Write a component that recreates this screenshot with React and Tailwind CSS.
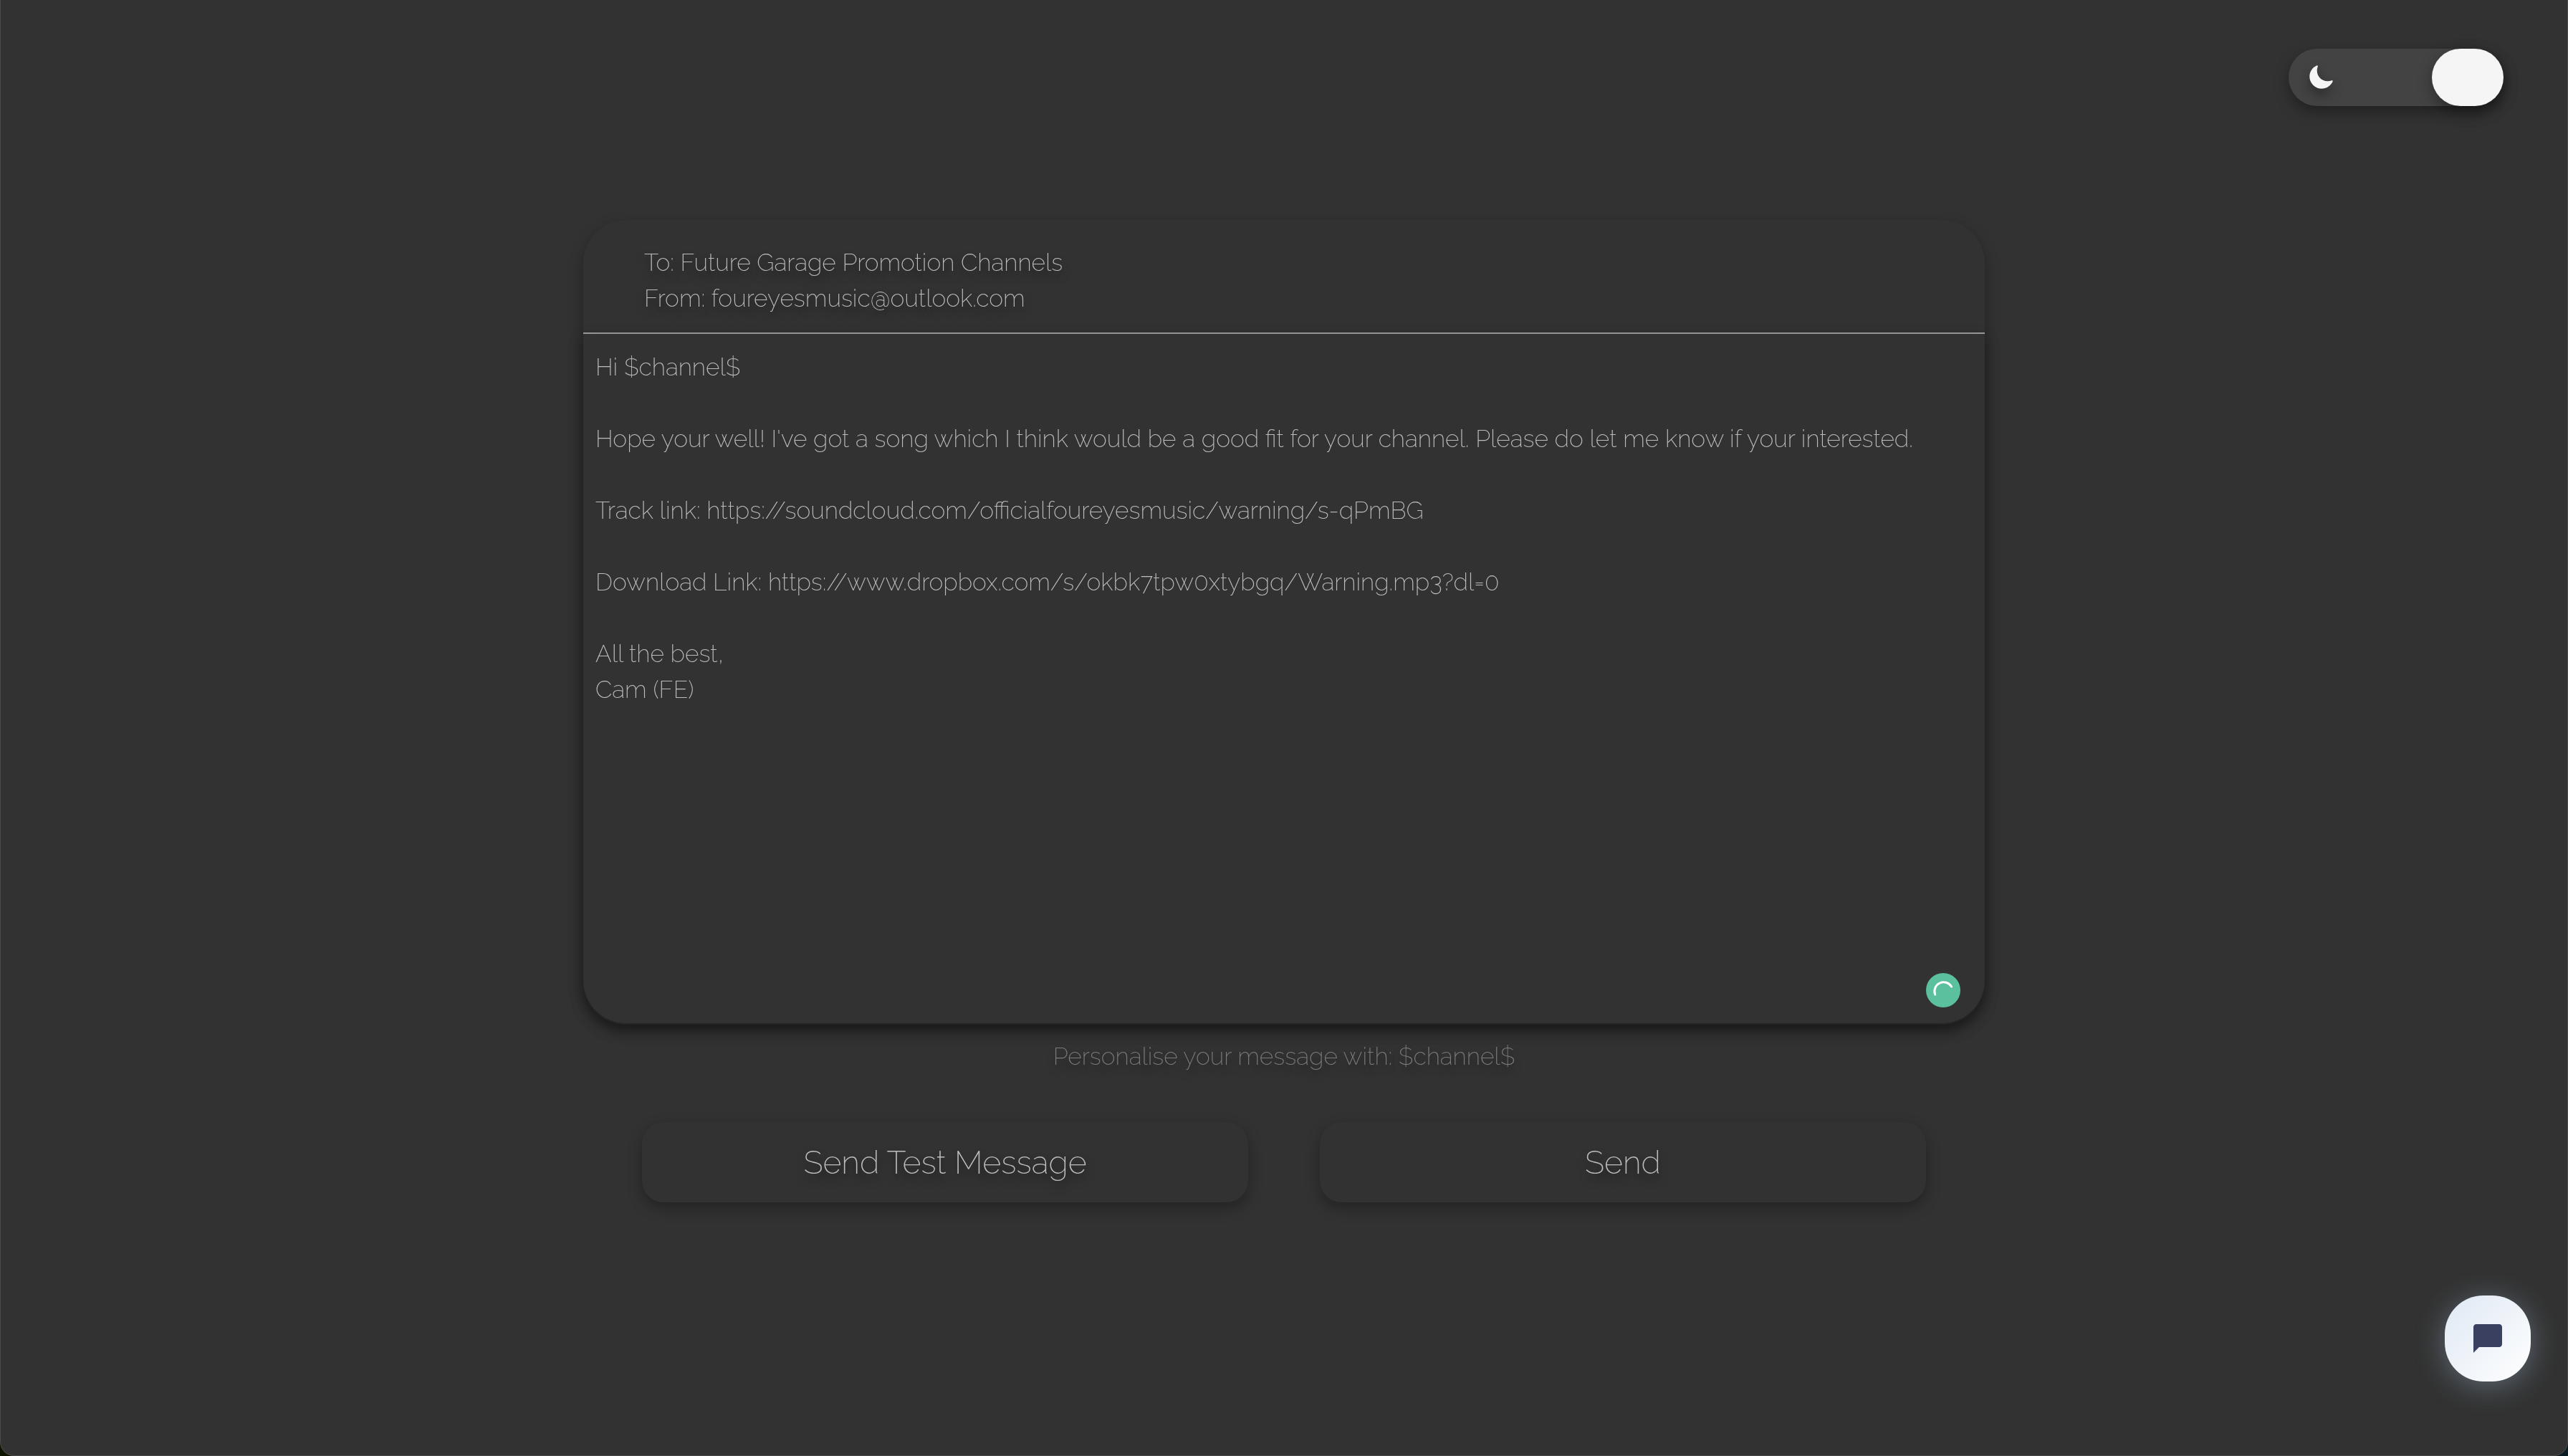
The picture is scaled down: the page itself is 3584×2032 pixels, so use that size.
import { useState } from 'react'
import { IoMoon } from 'react-icons/io5'

const DEFAULT_MESSAGE = `Hi $channel$

Hope your well! I've got a song which I think would be a good fit for your channel. Please do let me know if your interested.

Track link: https://soundcloud.com/officialfoureyesmusic/warning/s-qPmBG

Download Link: https://www.dropbox.com/s/okbk7tpw0xtybgq/Warning.mp3?dl=0

All the best,
Cam (FE)`

function ThemeToggle({ dark, onToggle }) {
  return (
    <button
      onClick={onToggle}
      className="flex items-center justify-between w-[300px] h-20 pl-[27px] rounded-full bg-[#434343] shadow-[0_8px_20px_rgba(0,0,0,0.35)]"
    >
      <IoMoon className="w-[37px] h-[37px] mb-0.5 text-[#f5f5f5] drop-shadow-[0_8px_8px_rgba(0,0,0,0.4)]" />
      {dark && (
        <div className="w-[100px] h-20 rounded-full bg-[#f5f5f5] shadow-[0_8px_20px_rgba(0,0,0,0.35)]" />
      )}
    </button>
  )
}

function GrammarBadge() {
  return (
    <svg viewBox="0 0 48 48" className="absolute right-[34px] bottom-[22px] w-12 h-12">
      <circle cx="24" cy="24" r="24" fill="#5bc09d" />
      <path
        d="M12.7 30 A12.75 12.75 0 0 1 35.6 19"
        fill="none"
        stroke="#fff"
        strokeWidth="3"
        strokeLinecap="round"
      />
    </svg>
  )
}

function MessageCard({ to, from, message, onChange }) {
  return (
    <section className="w-[1956px] h-[1123px] pb-0.5 flex flex-col rounded-[60px] bg-[#323232] shadow-[0_8px_20px_rgba(0,0,0,0.3)]">
      <header className="h-[159px] pt-[34px] pl-[85px] border-b-2 border-[#9e9e9e] text-shadow-[0_8px_12px_rgba(0,0,0,0.5)]">
        <p>To: {to}</p>
        <p>From: {from}</p>
      </header>
      <div className="relative flex-1 flex">
        <textarea
          value={message}
          onChange={onChange}
          spellCheck={false}
          className="flex-1 pt-[21px] pl-[17px] pr-4 resize-none outline-none rounded-b-[60px] bg-[#323232] shadow-[0_8px_20px_rgba(0,0,0,0.35)]"
        />
        <GrammarBadge />
      </div>
    </section>
  )
}

function ActionButton({ children }) {
  return (
    <button className="w-[846px] h-28 rounded-[30px] bg-[#323232] text-[44.8px] font-extralight text-shadow-[0_8px_12px_rgba(0,0,0,0.5)] shadow-[0_8px_20px_rgba(0,0,0,0.3)]">
      {children}
    </button>
  )
}

function ChatButton() {
  return (
    <button className="absolute right-[51px] bottom-[103px] w-[120px] h-[120px] flex items-center justify-center rounded-[54px] bg-linear-135 from-[#dfe8f3] to-white shadow-[0_6px_40px_rgba(150,175,200,0.45)]">
      <svg viewBox="0 0 20 20" className="w-10 h-10" fill="#394060">
        <path d="M18 0H2C.9 0 0 .9 0 2v18l4-4h14c1.1 0 2-.9 2-2V2c0-1.1-.9-2-2-2z" />
      </svg>
    </button>
  )
}

function App() {
  const [dark, setDark] = useState(true)
  const [message, setMessage] = useState(DEFAULT_MESSAGE)

  return (
    <div className="w-[3584px] h-[2032px] bg-linear-to-r from-[#0d1400] to-[#0b1c22]">
      <div className="relative w-full h-full flex flex-col overflow-hidden will-change-transform rounded-b-[20px] border-x border-b border-[#4a4a4a] bg-[#323232] text-[#bdbdbd] font-['Raleway','Lato',sans-serif] font-extralight text-[33.6px] leading-[50px]">
        <nav className="flex justify-end pt-[68px] pr-[89px]">
          <ThemeToggle dark={dark} onToggle={() => setDark(!dark)} />
        </nav>

        <main className="flex flex-col items-center pt-[159px]">
          <MessageCard
            to="Future Garage Promotion Channels"
            from="foureyesmusic@outlook.com"
            message={message}
            onChange={(e) => setMessage(e.target.value)}
          />
          <p className="mt-[19px] text-[#7c7c7c] text-shadow-[0_8px_12px_rgba(0,0,0,0.4)]">
            Personalise your message with: $channel$
          </p>
          <div className="flex gap-[100px] mt-[67px]">
            <ActionButton>Send Test Message</ActionButton>
            <ActionButton>Send</ActionButton>
          </div>
        </main>

        <ChatButton />
      </div>
    </div>
  )
}

export default App
